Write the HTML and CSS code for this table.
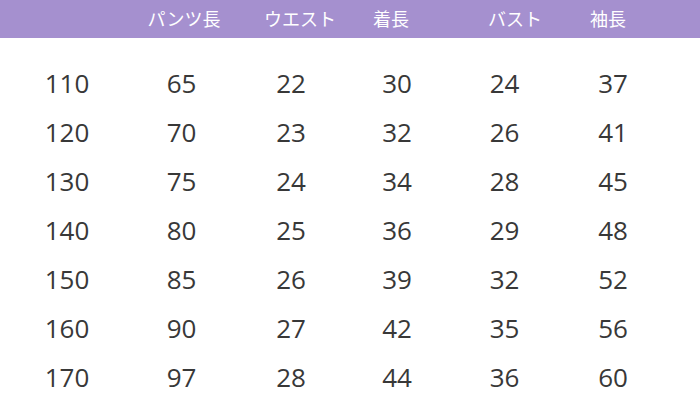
FILE: index.html
```html
<!DOCTYPE html>
<html lang="ja">
	<head>
		<meta charset="UTF-8" />
		<meta name="viewport" content="width=device-width, initial-scale=1.0" />
		<title>サイズ表</title>
		<link rel="stylesheet" href="styles.css">
	</head>

	<body>
		<div class="size-chart">
			<div class="row head">
				<span></span>
				<span class="h-pants">パンツ長</span>
				<span class="h-waist">ウエスト</span>
				<span class="h-length">着長</span>
				<span class="h-bust">バスト</span>
				<span class="h-sleeve">袖長</span>
			</div>

			<div class="rows">
				<div class="row"><span>110</span><span>65</span><span>22</span><span>30</span><span>24</span><span>37</span></div>
				<div class="row"><span>120</span><span>70</span><span>23</span><span>32</span><span>26</span><span>41</span></div>
				<div class="row"><span>130</span><span>75</span><span>24</span><span>34</span><span>28</span><span>45</span></div>
				<div class="row"><span>140</span><span>80</span><span>25</span><span>36</span><span>29</span><span>48</span></div>
				<div class="row"><span>150</span><span>85</span><span>26</span><span>39</span><span>32</span><span>52</span></div>
				<div class="row"><span>160</span><span>90</span><span>27</span><span>42</span><span>35</span><span>56</span></div>
				<div class="row"><span>170</span><span>97</span><span>28</span><span>44</span><span>36</span><span>60</span></div>
			</div>
		</div>
	</body>
</html>
```

FILE: styles.css
```css
:root {
	--head-bg:  #a590cf;
	--head-fg:  #ffffff;
	--cell-fg:  #383838;
	--cols:     116px 113px 106px 106px 109px 108px;
}

html, body {
	margin: 0;
	padding: 0;
	background: #fff;
}

.size-chart {
	width: 700px;
	height: 408px;
	overflow: hidden;
}

.row {
	display: grid;
	grid-template-columns: var(--cols);
	padding-left: 9px;
	text-align: center;
}

.head {
	height: 38px;
	line-height: 38px;
	background: var(--head-bg);
	color: var(--head-fg);
	font-family: "Noto Sans CJK JP", sans-serif;
	font-size: 18px;
}
.head span {
	line-height: 37px;
}
.h-pants  { padding-left: 5px; }
.h-waist  { padding-left: 18px; }
.h-length { padding-right: 12px; }
.h-bust   { padding-left: 21px; }
.h-sleeve { padding-right: 10px; }

.rows {
	padding-top: 21px;
	color: var(--cell-fg);
	font-family: "Open Sans", sans-serif;
	font-size: 26px;
}
.rows .row {
	height: 49px;
	line-height: 49px;
}
```
